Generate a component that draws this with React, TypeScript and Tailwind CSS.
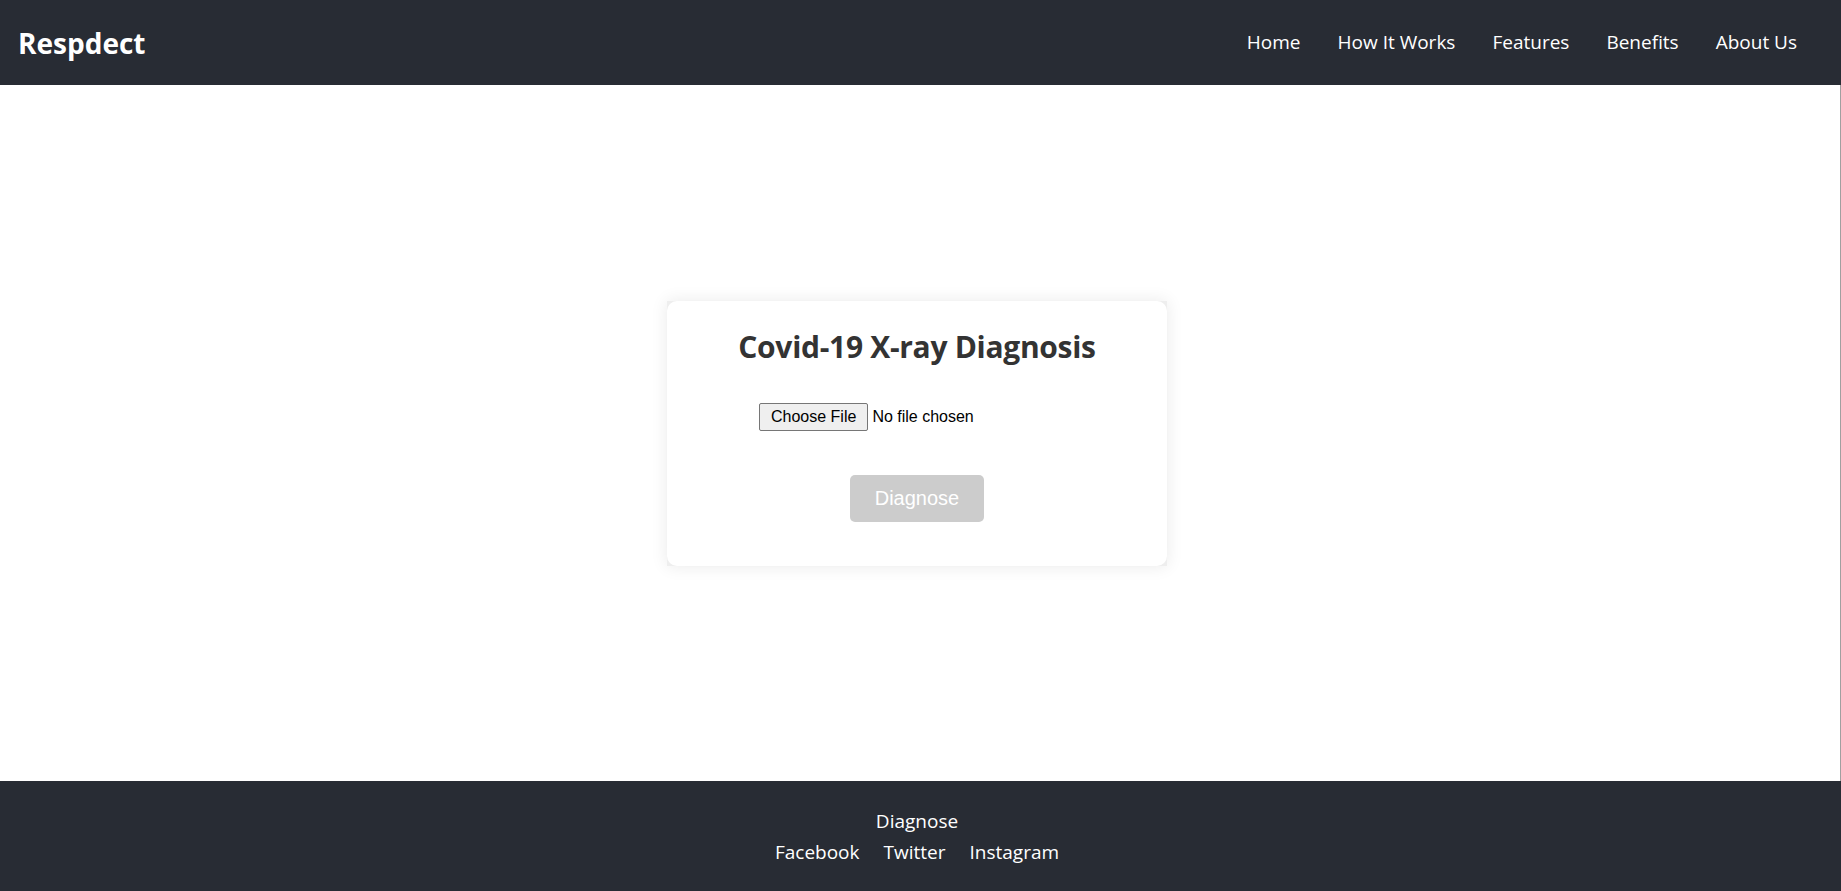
import React from 'react';

const navLinks = ['Home', 'How It Works', 'Features', 'Benefits', 'About Us'];
const socials = ['Facebook', 'Twitter', 'Instagram'];

const App = () => {
  return (
    <div className="flex flex-col min-h-[891px] font-['Open_Sans',sans-serif]">
      {/* Header */}
      <header className="h-[85px] shrink-0 bg-[#282c34] flex items-center justify-between pl-[18px] pr-[44px]">
        <h1 className="text-[28px] font-bold text-white">Respdect</h1>
        <nav className="flex items-center gap-[37px]">
          {navLinks.map((link) => (
            <a key={link} href="#" className="text-[19px] text-white">
              {link}
            </a>
          ))}
        </nav>
      </header>

      {/* Main */}
      <main className="flex-1 flex items-center justify-center bg-white border-r border-[#a0a0a0] pr-[6px]">
        <div className="w-[500px] h-[265px] bg-[#eeeeee] shadow-[0_0_16px_rgba(0,0,0,0.09)]">
          <div className="w-full h-full bg-white rounded-[10px] flex flex-col items-center pt-[31px]">
            <h2 className="text-[30px] leading-none font-bold text-[#333333] tracking-[-0.3px]">
              Covid-19 X-ray Diagnosis
            </h2>
            <input
              type="file"
              className="mt-[41px] ml-[2px] w-[318px] text-[16px] leading-[20px] text-black font-['Liberation_Sans',Arial,sans-serif] file:mr-[4px] file:border file:border-[#767676] file:bg-[#efefef] file:rounded-[2px] file:px-[11px] file:py-[3px] file:text-black"
            />
            <button
              disabled
              className="mt-[44px] w-[134px] h-[47px] rounded-[5px] bg-[#cccccc] text-white text-[20px] font-['Liberation_Sans',Arial,sans-serif]"
            >
              Diagnose
            </button>
          </div>
        </div>
      </main>

      {/* Footer */}
      <footer className="h-[110px] shrink-0 bg-[#282c34] flex flex-col items-center pt-[25px] pr-[7px] text-white text-[19px] leading-[31px]">
        <a href="#">Diagnose</a>
        <div className="flex gap-[24px]">
          {socials.map((s) => (
            <a key={s} href="#">
              {s}
            </a>
          ))}
        </div>
      </footer>
    </div>
  );
};

export default App;
